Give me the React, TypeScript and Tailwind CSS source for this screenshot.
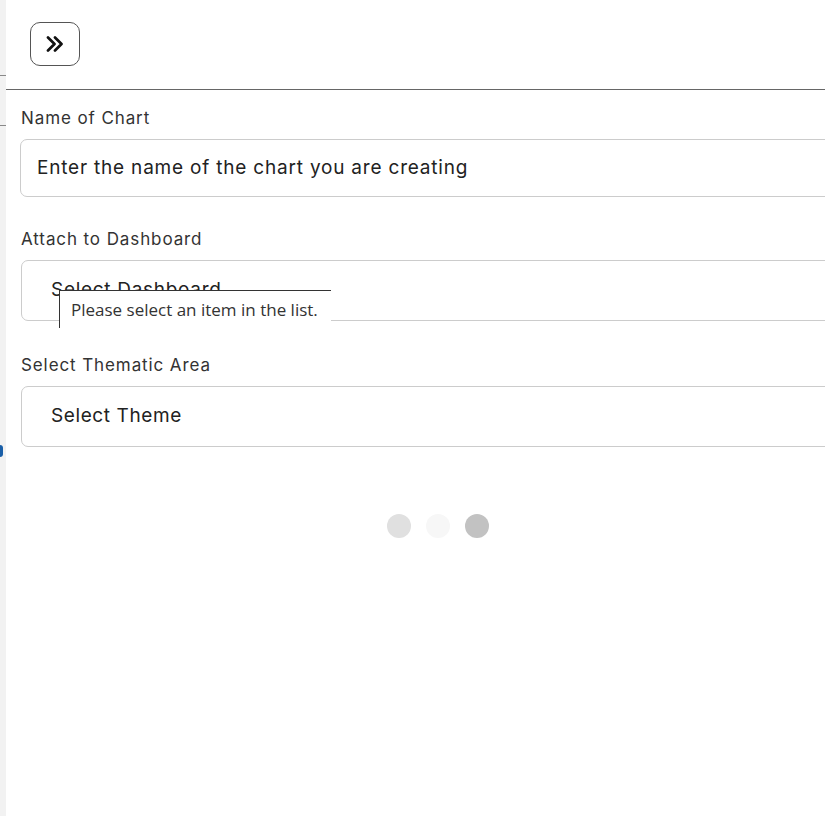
const font = { fontFamily: "Inter, 'Noto Sans', sans-serif" };

function Field({ label, children }: { label: string; children: React.ReactNode }) {
  return (
    <div className="flex flex-col">
      <label className="text-[17px] leading-[24px] text-[#333] tracking-[0.9px]">{label}</label>
      {children}
    </div>
  );
}

export default function App() {
  return (
    <div className="flex w-[825px] h-[816px] overflow-hidden bg-white" style={font}>
      <div className="w-[6px] shrink-0 bg-[#f2f2f2] flex flex-col">
        <div className="mt-[75px] h-px bg-[#888]" />
        <div className="mt-[49px] h-px bg-[#888]" />
        <div className="mt-[319px] h-[12px] w-[3px] rounded-r-full bg-[#1a5fa8]" />
      </div>
      <div className="flex flex-col w-[900px] shrink-0 bg-white">
        <div className="h-[90px] border-b border-[#666] pt-[22px] pl-[24px]">
          <button className="w-[50px] h-[44px] rounded-[10px] border border-[#555] flex items-center justify-center">
            <svg width="18" height="16" viewBox="0 0 18 16" fill="none" stroke="#111" strokeWidth="2.7" strokeLinecap="round" strokeLinejoin="round">
              <path d="M2 1.5l6.5 6.5L2 14.5" />
              <path d="M9 1.5l6.5 6.5L9 14.5" />
            </svg>
          </button>
        </div>
        <div className="flex flex-col pl-[15px] pt-[16px]">
          <Field label="Name of Chart">
            <div className="mt-[9px] -ml-px h-[58px] rounded-[7px] border border-[#ccc] flex items-center pl-[16px] text-[19px] tracking-[0.8px] text-[#222]">
              Enter the name of the chart you are creating
            </div>
          </Field>
          <div className="h-[30px]" />
          <Field label="Attach to Dashboard">
            <div className="relative mt-[9px] h-[61px] rounded-[7px] border border-[#ccc] flex items-center pl-[29px] text-[19px] tracking-[0.7px] text-[#222]">
              Select Dashboard
              <div
                className="absolute left-[37px] top-[29px] w-[272px] h-[38px] bg-white border-t border-l border-[#333] flex items-center pl-[11px] text-[17px] tracking-normal text-[#333]"
                style={{ fontFamily: "'Open Sans', 'Noto Sans', sans-serif" }}
              >
                Please select an item in the list.
              </div>
            </div>
          </Field>
          <div className="h-[32px]" />
          <Field label="Select Thematic Area">
            <div className="mt-[9px] h-[61px] rounded-[7px] border border-[#ccc] flex items-center pl-[29px] text-[19px] tracking-[0.6px] text-[#222]">
              Select Theme
            </div>
          </Field>
          <div className="flex gap-[15px] pl-[366px] mt-[67px]">
            <div className="w-[24px] h-[24px] rounded-full bg-[#e0e0e0]" />
            <div className="w-[24px] h-[24px] rounded-full bg-[#f7f7f7]" />
            <div className="w-[24px] h-[24px] rounded-full bg-[#c2c2c2]" />
          </div>
        </div>
      </div>
    </div>
  );
}
